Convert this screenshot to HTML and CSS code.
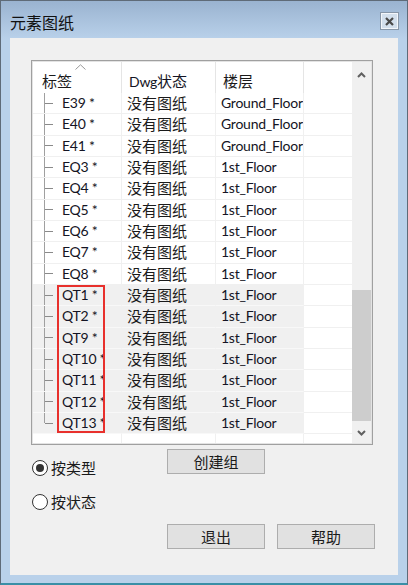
FILE: index.html
```html
<!DOCTYPE html>
<html lang="zh-CN">
<head>
  <meta charset="UTF-8">
  <title>元素图纸</title>
  <link rel="stylesheet" href="styles.css">
</head>
<body>
  <div class="window">
    <div class="titlebar">
      <span class="title">元素图纸</span>
      <span class="close">
        <svg width="9" height="9" viewBox="0 0 9 9"><path d="M1 1L8 8M8 1L1 8" stroke="#4a4a4a" stroke-width="2.2"/></svg>
      </span>
    </div>
    <div class="panel">
      <div class="list">
        <div class="list-inner">
          <div class="grid">
            <div class="row head">
              <div class="cell c1">标签
                <svg class="sort" width="11" height="6" viewBox="0 0 11 6"><polyline points="0.5,5.5 5.5,0.8 10.5,5.5" fill="none" stroke="#9a9a9a" stroke-width="1"/></svg>
              </div>
              <div class="cell c2 lat">Dwg<span class="cjk">状态</span></div>
              <div class="cell c3">楼层</div>
              <div class="cell c4"></div>
            </div>
            <div class="row"><div class="cell c1 tree lat">E39 *</div><div class="cell c2">没有图纸</div><div class="cell c3 lat">Ground_Floor</div><div class="cell c4"></div></div>
            <div class="row"><div class="cell c1 tree lat">E40 *</div><div class="cell c2">没有图纸</div><div class="cell c3 lat">Ground_Floor</div><div class="cell c4"></div></div>
            <div class="row"><div class="cell c1 tree lat">E41 *</div><div class="cell c2">没有图纸</div><div class="cell c3 lat">Ground_Floor</div><div class="cell c4"></div></div>
            <div class="row"><div class="cell c1 tree lat">EQ3 *</div><div class="cell c2">没有图纸</div><div class="cell c3 lat">1st_Floor</div><div class="cell c4"></div></div>
            <div class="row"><div class="cell c1 tree lat">EQ4 *</div><div class="cell c2">没有图纸</div><div class="cell c3 lat">1st_Floor</div><div class="cell c4"></div></div>
            <div class="row"><div class="cell c1 tree lat">EQ5 *</div><div class="cell c2">没有图纸</div><div class="cell c3 lat">1st_Floor</div><div class="cell c4"></div></div>
            <div class="row"><div class="cell c1 tree lat">EQ6 *</div><div class="cell c2">没有图纸</div><div class="cell c3 lat">1st_Floor</div><div class="cell c4"></div></div>
            <div class="row"><div class="cell c1 tree lat">EQ7 *</div><div class="cell c2">没有图纸</div><div class="cell c3 lat">1st_Floor</div><div class="cell c4"></div></div>
            <div class="row"><div class="cell c1 tree lat">EQ8 *</div><div class="cell c2">没有图纸</div><div class="cell c3 lat">1st_Floor</div><div class="cell c4"></div></div>
            <div class="row sel"><div class="cell c1 tree lat">QT1 *</div><div class="cell c2">没有图纸</div><div class="cell c3 lat">1st_Floor</div><div class="cell c4"></div></div>
            <div class="row sel"><div class="cell c1 tree lat">QT2 *</div><div class="cell c2">没有图纸</div><div class="cell c3 lat">1st_Floor</div><div class="cell c4"></div></div>
            <div class="row sel"><div class="cell c1 tree lat">QT9 *</div><div class="cell c2">没有图纸</div><div class="cell c3 lat">1st_Floor</div><div class="cell c4"></div></div>
            <div class="row sel"><div class="cell c1 tree lat">QT10 *</div><div class="cell c2">没有图纸</div><div class="cell c3 lat">1st_Floor</div><div class="cell c4"></div></div>
            <div class="row sel"><div class="cell c1 tree lat">QT11 *</div><div class="cell c2">没有图纸</div><div class="cell c3 lat">1st_Floor</div><div class="cell c4"></div></div>
            <div class="row sel"><div class="cell c1 tree lat">QT12 *</div><div class="cell c2">没有图纸</div><div class="cell c3 lat">1st_Floor</div><div class="cell c4"></div></div>
            <div class="row sel"><div class="cell c1 tree last lat">QT13 *</div><div class="cell c2">没有图纸</div><div class="cell c3 lat">1st_Floor</div><div class="cell c4"></div></div>
            <div class="row"><div class="cell c1"></div><div class="cell c2"></div><div class="cell c3"></div><div class="cell c4"></div></div>
          </div>
          <div class="scroll">
            <div class="sb-btn up">
              <svg width="9" height="6" viewBox="0 0 9 6"><polyline points="1,5 4.5,1.5 8,5" fill="none" stroke="#606060" stroke-width="2"/></svg>
            </div>
            <div class="track"><div class="thumb"></div></div>
            <div class="sb-btn down">
              <svg width="9" height="6" viewBox="0 0 9 6"><polyline points="1,1 4.5,4.5 8,1" fill="none" stroke="#606060" stroke-width="2"/></svg>
            </div>
          </div>
        </div>
        <!-- 标注框 -->
        <div class="mark"></div>
      </div>

      <div class="controls">
        <div class="radios">
          <label class="radio"><span class="dot on"></span>按类型</label>
          <label class="radio"><span class="dot"></span>按状态</label>
        </div>
        <button class="btn b-create">创建组</button>
        <button class="btn b-exit">退出</button>
        <button class="btn b-help">帮助</button>
      </div>
    </div>
  </div>
</body>
</html>
```

FILE: styles.css
```css
body {
  margin: 0;
  font-family: "Noto Sans CJK SC", "Noto Sans", sans-serif;
  font-size: 15px;
  color: #1a1a1a;
}
.window {
  width: 408px;
  height: 585px;
  box-sizing: border-box;
  border: 1px solid #5f6b78;
  border-bottom: 2px solid #3a8fa6;
  background: linear-gradient(#9ab3d0 0, #b9d1ea 38px, #b9d1ea 100%);
  display: flex;
  flex-direction: column;
}
.titlebar {
  flex: none;
  height: 37px;
  display: flex;
  justify-content: space-between;
  align-items: flex-start;
  padding: 0 8px 0 9px;
}
.title {
  margin-top: 13px;
  font-size: 16px;
  line-height: 16px;
  color: #111;
}
.close {
  margin-top: 11px;
  width: 19px;
  height: 18px;
  box-sizing: border-box;
  border: 1px solid #8796a8;
  background: #d3dfec;
  box-shadow: inset 0 0 0 1px #f3f6fa;
  display: flex;
  align-items: center;
  justify-content: center;
}
.panel {
  flex: none;
  margin: 0 9px;
  height: 537px;
  box-sizing: border-box;
  background: #f0f0f0;
  padding: 22px 0 0 21px;
}

/* 列表 */
.list {
  position: relative;
  width: 342px;
  height: 385px;
  box-sizing: border-box;
  border: 1px solid #a0a0a0;
}
.list-inner {
  height: 100%;
  box-sizing: border-box;
  border: 1px solid #e3e3e3;
  background: #fff;
  display: flex;
}
.grid {
  flex: 1;
  overflow: hidden;
}
.row {
  display: flex;
  height: 21.33px;
}
.cell {
  box-sizing: border-box;
  height: 100%;
  border-right: 1px solid #f0f0f0;
  border-bottom: 1px solid #f0f0f0;
  line-height: 20.33px;
  white-space: nowrap;
  overflow: hidden;
  padding-left: 5px;
}
.lat {
  font-family: Lato, "Noto Sans CJK SC", sans-serif;
  font-size: 14px;
  letter-spacing: -0.25px;
  color: #141424;
}
.cjk {
  font-family: "Noto Sans CJK SC", sans-serif;
  font-size: 15px;
  letter-spacing: 0;
}
.c1 { width: 89px; padding-left: 29px; }
.c2 { width: 94px; }
.c3 { width: 88px; }
.c4 { width: 48px; border-right: none; }

.row.head {
  height: 31px;
}
.head .cell {
  position: relative;
  border-bottom: none;
  border-right-color: #e5e5e5;
  line-height: 18px;
  padding-top: 10px;
  padding-left: 7px;
}
.head .c1 { padding-left: 9px; }
.head .c4 { border-right: none; }
.sort {
  position: absolute;
  left: 42px;
  top: 2px;
}

.tree {
  background-image: linear-gradient(#a0a0a0, #a0a0a0), linear-gradient(#8a8a8a, #8a8a8a);
  background-size: 1px 100%, 8px 1px;
  background-position: 11px 0, 12px 50%;
  background-repeat: no-repeat;
}
.tree.last {
  background-size: 1px 50%, 8px 1px;
}
.sel .cell {
  background-color: #f0f0f0;
  border-bottom-color: #f8f8f8;
  border-right-color: #f0f0f0;
}
.sel .c4 {
  background-color: #fff;
  border-bottom-color: #f0f0f0;
}

/* 滚动条 */
.scroll {
  width: 19px;
  background: #f0f0f0;
  display: flex;
  flex-direction: column;
}
.sb-btn {
  height: 25px;
  display: flex;
  align-items: center;
  justify-content: center;
}
.sb-btn.down {
  height: 21px;
}
.track {
  flex: 1;
}
.thumb {
  margin-top: 203px;
  height: 131px;
  background: #cdcdcd;
}

.mark {
  position: absolute;
  left: 25px;
  top: 224px;
  width: 48px;
  height: 148px;
  box-sizing: border-box;
  border: 2px solid #e8302c;
}

/* 底部控件 */
.controls {
  display: grid;
  grid-template-columns: 123px 98px 98px;
  grid-template-rows: 25px 50px 25px;
  column-gap: 12px;
  margin-top: 4px;
  padding-left: 1px;
}
.radios {
  grid-column: 1;
  grid-row: 1 / 4;
  display: flex;
  flex-direction: column;
  gap: 18px;
  padding-top: 11px;
}
.radio {
  display: flex;
  align-items: center;
  gap: 3px;
  height: 16px;
  line-height: 16px;
}
.dot {
  width: 16px;
  height: 16px;
  box-sizing: border-box;
  border: 1px solid #333;
  border-radius: 50%;
  background: #fff;
  display: flex;
  align-items: center;
  justify-content: center;
}
.dot.on::after {
  content: "";
  width: 8px;
  height: 8px;
  border-radius: 50%;
  background: #333;
}
.btn {
  margin: 0;
  padding: 0;
  border: 1px solid #adadad;
  background: #e1e1e1;
  font-family: inherit;
  font-size: 15px;
  color: #1a1a1a;
}
.b-create { grid-column: 2; grid-row: 1; }
.b-exit { grid-column: 2; grid-row: 3; }
.b-help { grid-column: 3; grid-row: 3; }
```
